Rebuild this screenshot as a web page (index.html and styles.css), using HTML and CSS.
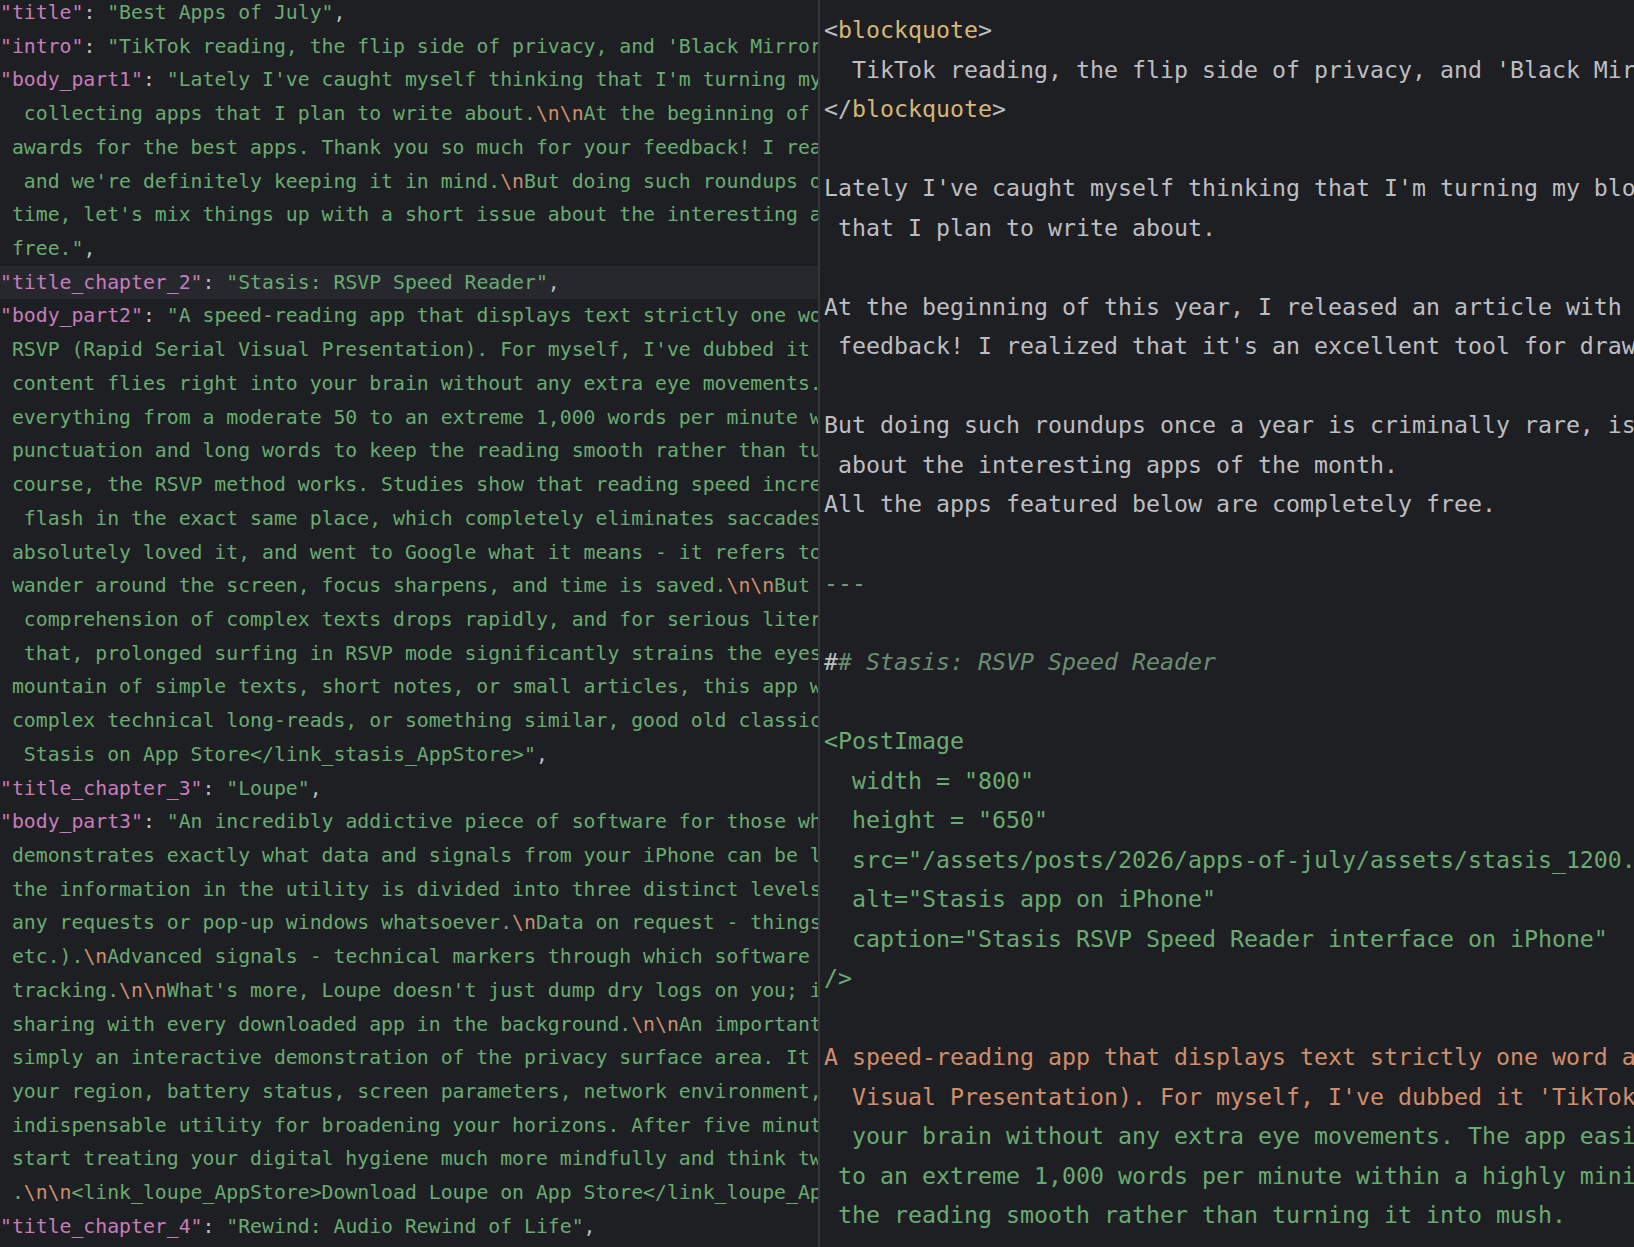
FILE: index.html
```html
<!DOCTYPE html>
<html lang="en">
<head>
<meta charset="utf-8">
<title>Editor</title>
<link rel="stylesheet" href="styles.css">
</head>
<body>
<div class="editor">
  <section class="pane pane-json">
    <div class="code">
      <div class="ln"><span class="k">"title"</span><span class="p">: </span><span class="s">"Best Apps of July"</span><span class="p">,</span></div>
      <div class="ln"><span class="k">"intro"</span><span class="p">: </span><span class="s">"TikTok reading, the flip side of privacy, and 'Black Mirror' in your pocket"</span><span class="p">,</span></div>
      <div class="ln"><span class="k">"body_part1"</span><span class="p">: </span><span class="s">"Lately I've caught myself thinking that I'm turning my blog into</span></div>
      <div class="ln"><span class="s">  collecting apps that I plan to write about.</span><span class="e">\n\n</span><span class="s">At the beginning of this year</span></div>
      <div class="ln"><span class="s"> awards for the best apps. Thank you so much for your feedback! I realized</span></div>
      <div class="ln"><span class="s">  and we're definitely keeping it in mind.</span><span class="e">\n</span><span class="s">But doing such roundups once a year</span></div>
      <div class="ln"><span class="s"> time, let's mix things up with a short issue about the interesting apps</span></div>
      <div class="ln"><span class="s"> free."</span><span class="p">,</span></div>
      <div class="ln current"><span class="k">"title_chapter_2"</span><span class="p">: </span><span class="s">"Stasis: RSVP Speed Reader"</span><span class="p">,</span></div>
      <div class="ln"><span class="k">"body_part2"</span><span class="p">: </span><span class="s">"A speed-reading app that displays text strictly one word</span></div>
      <div class="ln"><span class="s"> RSVP (Rapid Serial Visual Presentation). For myself, I've dubbed it 'TikTok</span></div>
      <div class="ln"><span class="s"> content flies right into your brain without any extra eye movements. The</span></div>
      <div class="ln"><span class="s"> everything from a moderate 50 to an extreme 1,000 words per minute within</span></div>
      <div class="ln"><span class="s"> punctuation and long words to keep the reading smooth rather than turning</span></div>
      <div class="ln"><span class="s"> course, the RSVP method works. Studies show that reading speed increases</span></div>
      <div class="ln"><span class="s">  flash in the exact same place, which completely eliminates saccades</span></div>
      <div class="ln"><span class="s"> absolutely loved it, and went to Google what it means - it refers to</span></div>
      <div class="ln"><span class="s"> wander around the screen, focus sharpens, and time is saved.</span><span class="e">\n\n</span><span class="s">But there</span></div>
      <div class="ln"><span class="s">  comprehension of complex texts drops rapidly, and for serious literature</span></div>
      <div class="ln"><span class="s">  that, prolonged surfing in RSVP mode significantly strains the eyes.</span></div>
      <div class="ln"><span class="s"> mountain of simple texts, short notes, or small articles, this app will</span></div>
      <div class="ln"><span class="s"> complex technical long-reads, or something similar, good old classic</span></div>
      <div class="ln"><span class="s">  Stasis on App Store&lt;/link_stasis_AppStore&gt;"</span><span class="p">,</span></div>
      <div class="ln"><span class="k">"title_chapter_3"</span><span class="p">: </span><span class="s">"Loupe"</span><span class="p">,</span></div>
      <div class="ln"><span class="k">"body_part3"</span><span class="p">: </span><span class="s">"An incredibly addictive piece of software for those who</span></div>
      <div class="ln"><span class="s"> demonstrates exactly what data and signals from your iPhone can be leaked</span></div>
      <div class="ln"><span class="s"> the information in the utility is divided into three distinct levels:</span></div>
      <div class="ln"><span class="s"> any requests or pop-up windows whatsoever.</span><span class="e">\n</span><span class="s">Data on request - things</span></div>
      <div class="ln"><span class="s"> etc.).</span><span class="e">\n</span><span class="s">Advanced signals - technical markers through which software</span></div>
      <div class="ln"><span class="s"> tracking.</span><span class="e">\n\n</span><span class="s">What's more, Loupe doesn't just dump dry logs on you; it</span></div>
      <div class="ln"><span class="s"> sharing with every downloaded app in the background.</span><span class="e">\n\n</span><span class="s">An important</span></div>
      <div class="ln"><span class="s"> simply an interactive demonstration of the privacy surface area. It</span></div>
      <div class="ln"><span class="s"> your region, battery status, screen parameters, network environment,</span></div>
      <div class="ln"><span class="s"> indispensable utility for broadening your horizons. After five minutes</span></div>
      <div class="ln"><span class="s"> start treating your digital hygiene much more mindfully and think twice</span></div>
      <div class="ln"><span class="s"> .</span><span class="e">\n\n</span><span class="s">&lt;link_loupe_AppStore&gt;Download Loupe on App Store&lt;/link_loupe_AppStore&gt;</span></div>
      <div class="ln"><span class="k">"title_chapter_4"</span><span class="p">: </span><span class="s">"Rewind: Audio Rewind of Life"</span><span class="p">,</span></div>
    </div>
  </section>
  <section class="pane pane-md">
    <div class="code">
      <div class="ln"><span class="p">&lt;</span><span class="t">blockquote</span><span class="p">&gt;</span></div>
      <div class="ln"><span class="p">  TikTok reading, the flip side of privacy, and 'Black Mirror' in your pocket</span></div>
      <div class="ln"><span class="p">&lt;/</span><span class="t">blockquote</span><span class="p">&gt;</span></div>
      <div class="ln"> </div>
      <div class="ln"><span class="p">Lately I've caught myself thinking that I'm turning my blog into</span></div>
      <div class="ln"><span class="p"> that I plan to write about.</span></div>
      <div class="ln"> </div>
      <div class="ln"><span class="p">At the beginning of this year, I released an article with awards</span></div>
      <div class="ln"><span class="p"> feedback! I realized that it's an excellent tool for drawing</span></div>
      <div class="ln"> </div>
      <div class="ln"><span class="p">But doing such roundups once a year is criminally rare, isn't it?</span></div>
      <div class="ln"><span class="p"> about the interesting apps of the month.</span></div>
      <div class="ln"><span class="p">All the apps featured below are completely free.</span></div>
      <div class="ln"> </div>
      <div class="ln"><span class="hr">---</span></div>
      <div class="ln"> </div>
      <div class="ln"><span class="p">#</span><span class="h"># Stasis: RSVP Speed Reader</span></div>
      <div class="ln"> </div>
      <div class="ln"><span class="s">&lt;PostImage</span></div>
      <div class="ln"><span class="s">  width = "800"</span></div>
      <div class="ln"><span class="s">  height = "650"</span></div>
      <div class="ln"><span class="s">  src="/assets/posts/2026/apps-of-july/assets/stasis_1200.webp"</span></div>
      <div class="ln"><span class="s">  alt="Stasis app on iPhone"</span></div>
      <div class="ln"><span class="s">  caption="Stasis RSVP Speed Reader interface on iPhone"</span></div>
      <div class="ln"><span class="s">/&gt;</span></div>
      <div class="ln"> </div>
      <div class="ln"><span class="o">A speed-reading app that displays text strictly one word at a time</span></div>
      <div class="ln"><span class="o">  Visual Presentation). For myself, I've dubbed it 'TikTok reading'</span></div>
      <div class="ln"><span class="s">  your brain without any extra eye movements. The app easily</span></div>
      <div class="ln"><span class="s"> to an extreme 1,000 words per minute within a highly minimalist</span></div>
      <div class="ln"><span class="s"> the reading smooth rather than turning it into mush.</span></div>
    </div>
  </section>
</div>
</body>
</html>
```

FILE: styles.css
```css
html, body {
  margin: 0;
  padding: 0;
  background: #1e1f22;
}

body {
  width: 100vw;
  height: 100vh;
  overflow: hidden;
}

.editor {
  display: flex;
  height: 100vh;
  background: #1e1f22;
}

.pane {
  overflow: hidden;
  font-family: "DejaVu Sans Mono", "Liberation Mono", monospace;
  color: #bcbec4;
}

.pane-json {
  flex: 0 0 818px;
  width: 818px;
  border-right: 2px solid #34363a;
  font-size: 19.8px;
  line-height: 33.72px;
}

.pane-json .code {
  margin-top: -4px;
  padding-left: 0;
}

.pane-md {
  flex: 1 1 auto;
  min-width: 0;
  font-size: 23.25px;
  line-height: 39.5px;
}

.pane-md .code {
  padding-top: 10px;
  padding-left: 4px;
}

.ln {
  white-space: pre;
}

.current {
  background: #26282e;
}

.k { color: #c77dbb; }
.s { color: #6aab73; }
.e { color: #cf8e6d; }
.p { color: #bcbec4; }
.t { color: #d5b778; }
.o { color: #cf8e6d; }
.hr { color: #7a9a7e; }
.h {
  color: #6b8d75;
  font-style: italic;
}
```
